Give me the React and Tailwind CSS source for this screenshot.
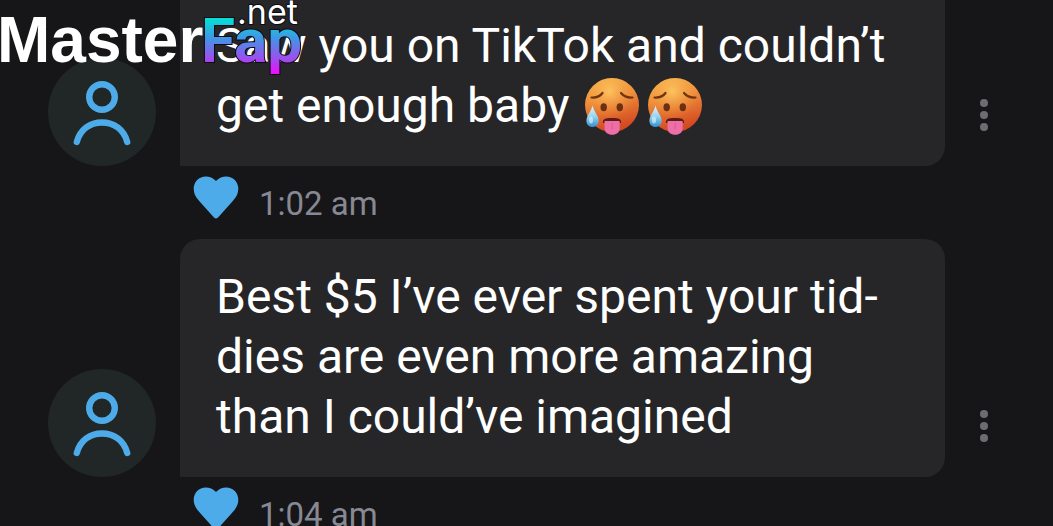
const messages = [
  {
    id: 1,
    lines: ["Saw you on TikTok and couldn’t", "get enough baby"],
    emojis: 2,
    time: "1:02 am",
    corners: "rounded-br-[20px] -mt-3",
  },
  {
    id: 2,
    lines: ["Best $5 I’ve ever spent your tid-", "dies are even more amazing", "than I could’ve imagined"],
    emojis: 0,
    time: "1:04 am",
    corners: "rounded-[20px] rounded-bl-none",
  },
];

function HotFace() {
  return (
    <svg viewBox="0 0 54 58" className="inline-block w-[54px] h-[58px] ml-1 mr-[5px] align-[-14px]" role="img" aria-label="hot face">
      <defs>
        <linearGradient id="face" x1="0" y1="0" x2="0.25" y2="1">
          <stop offset="0" stopColor="#f8b64c" />
          <stop offset="0.45" stopColor="#ee8d3a" />
          <stop offset="1" stopColor="#d44a22" />
        </linearGradient>
        <radialGradient id="glow" cx="0.45" cy="0.25" r="0.5">
          <stop offset="0" stopColor="#ffce66" stopOpacity="0.8" />
          <stop offset="1" stopColor="#f39a40" stopOpacity="0" />
        </radialGradient>
        <linearGradient id="drop" x1="0" y1="0" x2="0" y2="1">
          <stop offset="0" stopColor="#e4f5fb" />
          <stop offset="0.5" stopColor="#9ad5ef" />
          <stop offset="1" stopColor="#2f8fd0" />
        </linearGradient>
      </defs>
      <circle cx="27" cy="27" r="27" fill="url(#face)" />
      <circle cx="27" cy="27" r="27" fill="url(#glow)" />
      <path d="M6.5 19.5Q14 20 17.5 15M36 15Q40 20 47.5 19.5" fill="none" stroke="#713413" strokeWidth="2.2" strokeLinecap="round" />
      <ellipse cx="18.7" cy="29.3" rx="3.2" ry="4" fill="#6b2f14" />
      <ellipse cx="34.8" cy="29.3" rx="3.2" ry="4" fill="#6b2f14" />
      <path d="M18 45C17.5 41 20 40 27 40S36.5 41 36 45Z" fill="#5a1b14" />
      <path d="M19.5 43H34.7V50C34.7 54.5 31.5 56.8 27.2 56.8S19.5 54.5 19.5 50Z" fill="#ee6fa6" />
      <path d="M27.2 45V51" stroke="#d95f98" strokeWidth="1.2" strokeLinecap="round" />
      <path d="M7.5 27.5C8.5 33 13.7 38 13.7 42.7C13.7 46.5 11 49 7.5 49S1.4 46.5 1.4 42.7C1.4 38 6.5 33 7.5 27.5Z" fill="url(#drop)" />
      <ellipse cx="6" cy="42" rx="2" ry="3.5" fill="#e3f6ff" opacity="0.6" />
    </svg>
  );
}

function Avatar() {
  return (
    <div className="w-[108px] h-[108px] shrink-0 rounded-full bg-[#212626]">
      <svg viewBox="0 0 108 108" fill="none" stroke="#4dabea" strokeWidth="6.4" strokeLinecap="round">
        <circle cx="54" cy="39" r="12.8" />
        <path d="M28.8 84C32 71.5 42 64.5 54 64.5S76 71.5 79.2 84" />
      </svg>
    </div>
  );
}

function Message({ message }) {
  return (
    <article>
      <div className="flex items-end pl-12">
        <Avatar />
        <div className={`ml-6 flex-1 bg-[#262628] px-9 pt-7 pb-[30px] text-[48px] leading-[60px] text-white ${message.corners}`}>
          {message.lines.map((line, i) => (
            <p key={line} className="h-[60px] whitespace-nowrap">
              {line}
              {i === message.lines.length - 1 && message.emojis > 0 && (
                <>
                  {" "}
                  {Array.from({ length: message.emojis }, (_, n) => <HotFace key={n} />)}
                </>
              )}
            </p>
          ))}
        </div>
        <button aria-label="More options" className="mr-[30px] flex h-[102px] w-[78px] flex-col items-center justify-center gap-1">
          <span className="h-2 w-2 rounded-full bg-[#6b6d70]"></span>
          <span className="h-2 w-2 rounded-full bg-[#6b6d70]"></span>
          <span className="h-2 w-2 rounded-full bg-[#6b6d70]"></span>
        </button>
      </div>
      <div className="ml-[193px] flex h-[73px] items-start gap-5 pt-[10px]">
        <button aria-label="Like">
          <svg viewBox="0 0 46 43" className="block h-[43px] w-[46px]" fill="#4dabea">
            <path d="M23 5C20 1.8 16.5 0.4 12.8 0.4C6 0.4 0.7 5.8 0.7 12.5C0.7 17.5 2.6 21 6.2 25L21 41.5Q23 43.6 25 41.5L39.8 25C43.4 21 45.3 17.5 45.3 12.5C45.3 5.8 40 0.4 33.2 0.4C29.5 0.4 26 1.8 23 5Z" />
          </svg>
        </button>
        <time className="pt-2 text-[33px] leading-10 text-[#868994]">{message.time}</time>
      </div>
    </article>
  );
}

function Watermark() {
  return (
    <div className="pointer-events-none absolute -left-1 top-0">
      <svg viewBox="0 0 310 80" className="h-20 w-[310px]">
        <defs>
          <linearGradient id="brand" gradientUnits="userSpaceOnUse" x1="0" y1="17" x2="0" y2="76">
            <stop offset="0" stopColor="#00e5d4" />
            <stop offset="0.35" stopColor="#3f98e6" />
            <stop offset="0.7" stopColor="#9a50ee" />
            <stop offset="1" stopColor="#ff00ff" />
          </linearGradient>
        </defs>
        <g fontWeight="700">
          <text x="1" y="62" fontSize="64" fontFamily="Liberation Sans, sans-serif" fill="#fff">
            Master
          </text>
          <text x="205" y="62" fontSize="62" fontFamily="Roboto, sans-serif" fill="url(#brand)" stroke="#0b0b12" strokeWidth="2" paintOrder="stroke">
            Fap
          </text>
        </g>
        <text x="241" y="24" fontSize="34" fontFamily="Inter, sans-serif" fill="#fff" stroke="#0b0b12" strokeWidth="2" paintOrder="stroke">
          .net
        </text>
      </svg>
    </div>
  );
}

export default function App() {
  return (
    <main className="relative h-screen overflow-hidden bg-[#161618] font-[Roboto,sans-serif]">
      {messages.map((message) => (
        <Message key={message.id} message={message} />
      ))}
      <Watermark />
    </main>
  );
}
